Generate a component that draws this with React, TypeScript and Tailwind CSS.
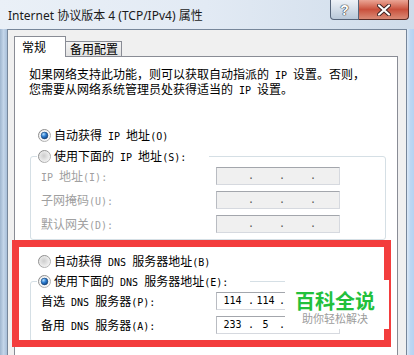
import React, { useId } from "react";

const A = ({ children }: { children: React.ReactNode }) => (
  <span className="font-['DejaVu_Sans_Mono',monospace] text-[10px]">{children}</span>
);

function Radio({ checked }: { checked?: boolean }) {
  const id = useId().replace(/:/g, "");
  return (
    <svg width="13" height="13" viewBox="0 0 13 13" className="shrink-0 block">
      <defs>
        <radialGradient id={`${id}f`} cx="0.45" cy="0.45" r="0.6">
          <stop offset="0" stopColor={checked ? "#e8e8e8" : "#cdcdcd"} />
          <stop offset="1" stopColor="#f8f8f8" />
        </radialGradient>
        <linearGradient id={`${id}b`} x1="0" y1="0" x2="1" y2="1">
          <stop offset="0" stopColor="#7e7e7e" />
          <stop offset="1" stopColor="#c2c2c2" />
        </linearGradient>
        <radialGradient id={`${id}d`} cx="0.35" cy="0.3" r="0.8">
          <stop offset="0" stopColor="#b4e0ff" />
          <stop offset="0.45" stopColor="#2f7fd2" />
          <stop offset="1" stopColor="#0b3b78" />
        </radialGradient>
      </defs>
      <circle cx="6.5" cy="6.5" r="6" fill={`url(#${id}f)`} stroke={`url(#${id}b)`} strokeWidth="1" />
      {checked && (
        <>
          <circle cx="6.5" cy="6.5" r="4.3" fill="#ffffff" />
          <circle cx="6.5" cy="6.5" r="3.4" fill={`url(#${id}d)`} stroke="#173f6f" strokeWidth="0.6" />
        </>
      )}
    </svg>
  );
}

function IpBox({ values, disabled }: { values: string[]; disabled?: boolean }) {
  const seg = ["w-[31px]", "w-[27px]", "w-[27px]", "w-[25px]"];
  const dotColor = disabled ? "text-[#555]" : "text-black";
  return (
    <div
      className={`w-[124px] h-[18px] border border-t-[#a3a6ac] border-l-[#b9bcc2] border-r-[#d6d9df] border-b-[#d6d9df] flex items-center ${
        disabled ? "bg-[#f0f0f0]" : "bg-white"
      }`}
    >
      {values.map((v, i) => (
        <React.Fragment key={i}>
          <div className={`${seg[i]} text-center font-['DejaVu_Sans_Mono',monospace] text-[10px] leading-[12px] text-black`}>{v}</div>
          {i < 3 && (
            <div className={`w-[4px] text-center font-['DejaVu_Sans_Mono',monospace] text-[10px] leading-[12px] ${dotColor}`}>.</div>
          )}
        </React.Fragment>
      ))}
    </div>
  );
}

function Row({ label, values, disabled }: { label: React.ReactNode; values: string[]; disabled?: boolean }) {
  return (
    <div className="flex items-center h-[18px]">
      <div className={`w-[175px] whitespace-nowrap ${disabled ? "text-[#a0a0a0]" : "text-black"}`}>{label}</div>
      <IpBox values={values} disabled={disabled} />
    </div>
  );
}

export default function App() {
  return (
    <div className="w-[414px] h-[355px] overflow-hidden relative flex flex-col font-['Noto_Sans_CJK_SC',sans-serif] text-[12px] leading-[13px] text-black bg-[#dfe8f3]">
      {/* Title bar */}
      <div className="h-[29px] shrink-0 flex justify-between bg-gradient-to-r from-[#eaf0f7] via-[#e2eaf4] to-[#cfdcea]">
        <div className="self-center pl-[8px] pt-[1px] font-['Noto_Sans','Noto_Sans_CJK_SC',sans-serif] text-[12px] text-[#1a1a1a] whitespace-nowrap">
          Internet 协议版本 4 (TCP/IPv4) 属性
        </div>
        <div className="flex h-[20px] mr-[5px]">
          <div className="w-[29px] h-[20px] rounded-bl-[4px] border border-t-0 border-[#56657a] bg-gradient-to-b from-[#eef2f7] via-[#d3dde8] to-[#b9c8d8] flex items-center justify-center">
            <span className="text-white font-bold text-[14px] leading-[14px] font-['Liberation_Sans',sans-serif] [text-shadow:0_0_1px_#333,0_0_1px_#333,0_0_1px_#333]">?</span>
          </div>
          <div className="w-[50px] h-[20px] rounded-br-[4px] border border-l-0 border-t-0 border-[#5a2a24] bg-gradient-to-b from-[#eaa595] via-[#c9503c] to-[#d98a76] flex items-center justify-center">
            <svg width="14" height="12" viewBox="0 0 14 12">
              <path d="M2 1.5 L12 10.5 M12 1.5 L2 10.5" stroke="#3a2020" strokeWidth="4" strokeLinecap="round" />
              <path d="M2 1.5 L12 10.5 M12 1.5 L2 10.5" stroke="#ffffff" strokeWidth="2.2" strokeLinecap="round" />
            </svg>
          </div>
        </div>
      </div>

      {/* Body */}
      <div className="flex flex-1 min-h-0">
        <div className="w-[7px] bg-gradient-to-r from-[#9fb6cf] via-[#c3d5e9] to-[#a9c0da]" />
        <div className="w-[400px] border-l border-r border-t border-[#76869a] bg-[#f0f0f0] flex flex-col pt-[6px] pl-[6px] min-h-0">
          {/* Tabs */}
          <div className="flex items-end h-[21px] -mb-px relative z-10 shrink-0">
            <div className="w-[52px] h-[21px] border border-b-0 border-[#898c95] bg-white pl-[7px] pt-[3px]">常规</div>
            <div className="w-[56px] h-[15px] mb-px border border-l-0 border-b-0 border-[#898c95] bg-gradient-to-b from-[#f4f4f4] to-[#e2e2e2] pl-[4px]">
              备用配置
            </div>
          </div>
          {/* Panel */}
          <div className="w-[384px] flex-1 border border-[#898c95] bg-white flex flex-col">
            <div className="mt-[10px] pl-[14px] whitespace-nowrap">
              如果网络支持此功能，则可以获取自动指派的<A> IP </A>设置。否则，
              <br />
              您需要从网络系统管理员处获得适当的<A> IP </A>设置。
            </div>

            <div className="mt-[32px] ml-[23px] h-[13px] flex items-center gap-[3px] whitespace-nowrap">
              <Radio checked />
              <span>
                自动获得<A> IP </A>地址<A>(O)</A>
              </span>
            </div>

            <div className="mt-[14px] ml-[15px] w-[356px] border border-[#d5dfe5] rounded-[3px] relative pt-[10px] pb-[6px] pl-[10px] flex flex-col gap-[6px]">
              <div className="absolute left-[6px] top-[-7px] w-[172px] h-[13px] bg-white pl-[1px] flex items-center gap-[3px] whitespace-nowrap">
                <Radio />
                <span>
                  使用下面的<A> IP </A>地址<A>(S):</A>
                </span>
              </div>
              <Row disabled label={<><A>IP </A>地址<A>(I):</A></>} values={["", "", "", ""]} />
              <Row disabled label={<>子网掩码<A>(U):</A></>} values={["", "", "", ""]} />
              <Row disabled label={<>默认网关<A>(D):</A></>} values={["", "", "", ""]} />
            </div>

            <div className="mt-[15px] ml-[23px] h-[13px] flex items-center gap-[3px] whitespace-nowrap">
              <Radio />
              <span>
                自动获得<A> DNS </A>服务器地址<A>(B)</A>
              </span>
            </div>

            <div className="mt-[13px] ml-[15px] w-[356px] border border-[#d5dfe5] rounded-[3px] relative pt-[10px] pb-[7px] pl-[10px] flex flex-col gap-[6px]">
              <div className="absolute left-[6px] top-[-7px] w-[213px] h-[13px] bg-white pl-[1px] flex items-center gap-[3px] whitespace-nowrap">
                <Radio checked />
                <span>
                  使用下面的<A> DNS </A>服务器地址<A>(E):</A>
                </span>
              </div>
              <Row label={<>首选<A> DNS </A>服务器<A>(P):</A></>} values={["114", "114", "", ""]} />
              <Row label={<>备用<A> DNS </A>服务器<A>(A):</A></>} values={["233", "5", "", ""]} />
            </div>

            <div className="mt-[14px] ml-[27px] flex items-start">
              <div className="w-[13px] h-[13px] border border-[#8f8f8f] bg-gradient-to-br from-[#dcdcdc] to-[#fbfbfb]" />
            </div>
          </div>
        </div>
        <div className="w-[7px] bg-gradient-to-r from-[#dde9f6] via-[#bcd7f3] to-[#b5d3f2]" />
      </div>

      {/* Red highlight overlay */}
      <div className="absolute left-[12px] top-[240px] w-[379px] h-[107px] border-[7px] border-[#f33d3d]" />

      {/* Watermark */}
      <div className="absolute left-[285px] top-[280px] w-[104px] h-[49px] bg-white flex flex-col items-center pt-[10px] pr-[4px]">
        <div className="text-[20px] leading-[22px] font-bold text-[#22c03c] whitespace-nowrap">百科全说</div>
        <div className="text-[11px] leading-[13px] text-[#9c9c9c] whitespace-nowrap">助你轻松解决</div>
      </div>
    </div>
  );
}
